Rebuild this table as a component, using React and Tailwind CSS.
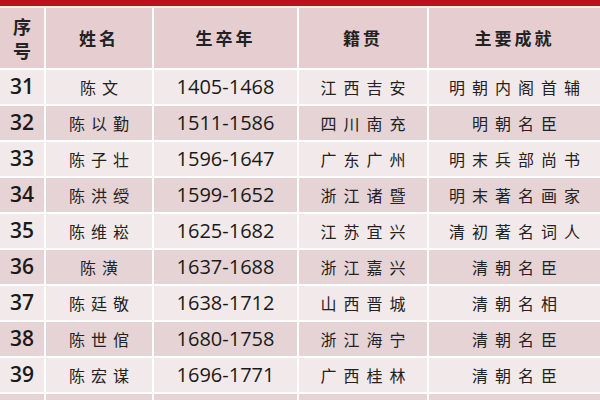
import React from 'react'

const rows = [
  ['31', '陈文', '1405-1468', '江西吉安', '明朝内阁首辅'],
  ['32', '陈以勤', '1511-1586', '四川南充', '明朝名臣'],
  ['33', '陈子壮', '1596-1647', '广东广州', '明末兵部尚书'],
  ['34', '陈洪绶', '1599-1652', '浙江诸暨', '明末著名画家'],
  ['35', '陈维崧', '1625-1682', '江苏宜兴', '清初著名词人'],
  ['36', '陈潢', '1637-1688', '浙江嘉兴', '清朝名臣'],
  ['37', '陈廷敬', '1638-1712', '山西晋城', '清朝名相'],
  ['38', '陈世倌', '1680-1758', '浙江海宁', '清朝名臣'],
  ['39', '陈宏谋', '1696-1771', '广西桂林', '清朝名臣'],
  ['40', '陈德荣', '1689-1747', '直隶安州', '清朝名臣'],
]

const cjk = "font-['Noto_Sans_CJK_SC',sans-serif]"
const num = "font-['Open_Sans','Liberation_Sans',sans-serif]"

export default function App() {
  return (
    <div className="w-[600px] h-[400px] overflow-hidden bg-white">
      {/* red band on top */}
      <div className="h-[6px] bg-[#b8121c]" />
      <div className="h-[2px] bg-[#f4eeee]" />

      <div className="grid grid-cols-[44px_106px_143px_128px_1fr] gap-[2px] bg-white">
        {/* header */}
        <div className={`h-[60px] bg-[#e5cdd0] flex flex-col items-center justify-center text-[18px] leading-[24px] font-bold text-[#222] ${cjk}`}>
          <span>序</span>
          <span>号</span>
        </div>
        {['姓名', '生卒年', '籍贯', '主要成就'].map((h) => (
          <div
            key={h}
            className={`h-[60px] bg-[#e5cdd0] flex items-center justify-center text-[17px] font-bold tracking-[3px] text-[#222] ${cjk}`}
          >
            {h}
          </div>
        ))}

        {rows.map((r, i) => {
          const bg = i % 2 === 0 ? 'bg-[#f2e9ea]' : 'bg-[#e6d3d5]'
          return (
            <React.Fragment key={r[0]}>
              <div className={`h-[34px] ${bg} flex items-center justify-center text-[21px] font-semibold text-[#1a1a1a] ${num}`}>
                {r[0]}
              </div>
              <div className={`h-[34px] ${bg} flex items-center justify-center text-[16px] tracking-[6px] pl-[6px] text-[#222] ${cjk}`}>
                {r[1]}
              </div>
              <div className={`h-[34px] ${bg} flex items-center justify-center text-[20px] text-[#1a1a1a] ${num}`}>
                {r[2]}
              </div>
              <div className={`h-[34px] ${bg} flex items-center justify-center text-[16px] tracking-[7px] pl-[7px] text-[#222] ${cjk}`}>
                {r[3]}
              </div>
              <div className={`h-[34px] ${bg} flex items-center justify-center text-[16px] tracking-[7px] pl-[7px] text-[#222] ${cjk}`}>
                {r[4]}
              </div>
            </React.Fragment>
          )
        })}
      </div>
    </div>
  )
}
